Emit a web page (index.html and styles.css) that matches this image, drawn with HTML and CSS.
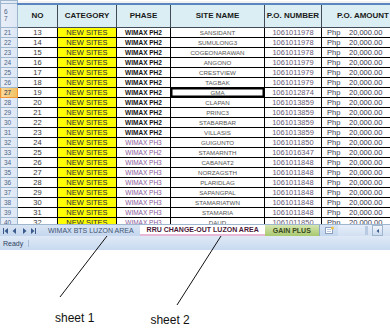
FILE: index.html
```html
<!DOCTYPE html>
<html lang="en">
<head>
    <meta charset="UTF-8">
    <meta name="viewport" content="width=device-width, initial-scale=1.0">
    <title>Sheets</title>
    <link rel="stylesheet" href="styles.css">
</head>
<body>
    <div class="excel">
        <div class="grid-wrap">
            <table class="grid">
                <colgroup>
                    <col class="c-rh"><col class="c-no"><col class="c-cat"><col class="c-phase"><col class="c-site"><col class="c-po"><col class="c-amt">
                </colgroup>
                <thead>
                    <tr class="strip"><th class="rh"></th><td colspan="6"></td></tr>
                    <tr class="head">
                        <th class="rh stack"><span>6</span><span>7</span></th>
                        <th>NO</th><th>CATEGORY</th><th>PHASE</th><th>SITE NAME</th><th>P.O. NUMBER</th><th>P.O. AMOUNT</th>
                    </tr>
                </thead>
                <tbody>
                    <tr><th class="rh">21</th><td class="no">13</td><td class="cat">NEW SITES</td><td class="ph">WIMAX PH2</td><td class="site">SANSIDANT</td><td class="po">1061011978</td><td class="amt"><span>Php</span><span>20,000.00</span></td></tr>
                    <tr><th class="rh">22</th><td class="no">14</td><td class="cat">NEW SITES</td><td class="ph">WIMAX PH2</td><td class="site">SUMULONG3</td><td class="po">1061011978</td><td class="amt"><span>Php</span><span>20,000.00</span></td></tr>
                    <tr><th class="rh">23</th><td class="no">15</td><td class="cat">NEW SITES</td><td class="ph">WIMAX PH2</td><td class="site">COGEONARAWAN</td><td class="po">1061011978</td><td class="amt"><span>Php</span><span>20,000.00</span></td></tr>
                    <tr><th class="rh">24</th><td class="no">16</td><td class="cat">NEW SITES</td><td class="ph">WIMAX PH2</td><td class="site">ANGONO</td><td class="po">1061011979</td><td class="amt"><span>Php</span><span>20,000.00</span></td></tr>
                    <tr><th class="rh">25</th><td class="no">17</td><td class="cat">NEW SITES</td><td class="ph">WIMAX PH2</td><td class="site">CRESTVIEW</td><td class="po">1061011979</td><td class="amt"><span>Php</span><span>20,000.00</span></td></tr>
                    <tr><th class="rh">26</th><td class="no">18</td><td class="cat">NEW SITES</td><td class="ph">WIMAX PH2</td><td class="site">TAGBAK</td><td class="po">1061011979</td><td class="amt"><span>Php</span><span>20,000.00</span></td></tr>
                    <tr><th class="rh active">27</th><td class="no">19</td><td class="cat">NEW SITES</td><td class="ph">WIMAX PH2</td><td class="site selected">GMA</td><td class="po">1061012874</td><td class="amt"><span>Php</span><span>20,000.00</span></td></tr>
                    <tr><th class="rh">28</th><td class="no">20</td><td class="cat">NEW SITES</td><td class="ph">WIMAX PH2</td><td class="site">CLAPAN</td><td class="po">1061013859</td><td class="amt"><span>Php</span><span>20,000.00</span></td></tr>
                    <tr><th class="rh">29</th><td class="no">21</td><td class="cat">NEW SITES</td><td class="ph">WIMAX PH2</td><td class="site">PRINC3</td><td class="po">1061013859</td><td class="amt"><span>Php</span><span>20,000.00</span></td></tr>
                    <tr><th class="rh">30</th><td class="no">22</td><td class="cat">NEW SITES</td><td class="ph">WIMAX PH2</td><td class="site">STABARBAR</td><td class="po">1061013859</td><td class="amt"><span>Php</span><span>20,000.00</span></td></tr>
                    <tr><th class="rh">31</th><td class="no">23</td><td class="cat">NEW SITES</td><td class="ph">WIMAX PH2</td><td class="site">VILLASIS</td><td class="po">1061013859</td><td class="amt"><span>Php</span><span>20,000.00</span></td></tr>
                    <tr><th class="rh">32</th><td class="no">24</td><td class="cat">NEW SITES</td><td class="ph ph3">WIMAX PH3</td><td class="site">GUIGUNTO</td><td class="po">1061011850</td><td class="amt"><span>Php</span><span>20,000.00</span></td></tr>
                    <tr><th class="rh">33</th><td class="no">25</td><td class="cat">NEW SITES</td><td class="ph ph3">WIMAX PH2</td><td class="site">STAMARNTH</td><td class="po">1061016347</td><td class="amt"><span>Php</span><span>20,000.00</span></td></tr>
                    <tr><th class="rh">34</th><td class="no">26</td><td class="cat">NEW SITES</td><td class="ph ph3">WIMAX PH3</td><td class="site">CABANAT2</td><td class="po">1061011848</td><td class="amt"><span>Php</span><span>20,000.00</span></td></tr>
                    <tr><th class="rh">35</th><td class="no">27</td><td class="cat">NEW SITES</td><td class="ph ph3">WIMAX PH3</td><td class="site">NORZAGSTH</td><td class="po">1061011848</td><td class="amt"><span>Php</span><span>20,000.00</span></td></tr>
                    <tr><th class="rh">36</th><td class="no">28</td><td class="cat">NEW SITES</td><td class="ph ph3">WIMAX PH3</td><td class="site">PLARIDLAG</td><td class="po">1061011848</td><td class="amt"><span>Php</span><span>20,000.00</span></td></tr>
                    <tr><th class="rh">37</th><td class="no">29</td><td class="cat">NEW SITES</td><td class="ph ph3">WIMAX PH3</td><td class="site">SAPANGPAL</td><td class="po">1061011848</td><td class="amt"><span>Php</span><span>20,000.00</span></td></tr>
                    <tr><th class="rh">38</th><td class="no">30</td><td class="cat">NEW SITES</td><td class="ph ph3">WIMAX PH3</td><td class="site">STAMARIATWN</td><td class="po">1061011848</td><td class="amt"><span>Php</span><span>20,000.00</span></td></tr>
                    <tr><th class="rh">39</th><td class="no">31</td><td class="cat">NEW SITES</td><td class="ph ph3">WIMAX PH3</td><td class="site">STAMARIA</td><td class="po">1061011848</td><td class="amt"><span>Php</span><span>20,000.00</span></td></tr>
                    <tr><th class="rh">40</th><td class="no">32</td><td class="cat">NEW SITES</td><td class="ph ph3">WIMAX PH3</td><td class="site">DAUD</td><td class="po">1061011850</td><td class="amt"><span>Php</span><span>20,000.00</span></td></tr>
                </tbody>
            </table>
        </div>

        <div class="tabs">
            <div class="nav">
                <svg width="38" height="8" viewBox="0 0 38 8">
                    <rect x="2" y="1" width="1" height="6" fill="#3a5a8c"/>
                    <path d="M7 1 L3.5 4 L7 7 Z" fill="#3a5a8c"/>
                    <path d="M15 1 L11.5 4 L15 7 Z" fill="#3a5a8c"/>
                    <path d="M22 1 L25.5 4 L22 7 Z" fill="#3a5a8c"/>
                    <path d="M30 1 L33.5 4 L30 7 Z" fill="#3a5a8c"/>
                    <rect x="34" y="1" width="1" height="6" fill="#3a5a8c"/>
                </svg>
            </div>
            <div class="tab">WIMAX BTS LUZON AREA</div>
            <div class="tab current">RRU CHANGE-OUT LUZON AREA</div>
            <div class="tab green">GAIN PLUS</div>
            <div class="new-sheet">
                <svg width="12" height="9" viewBox="0 0 12 9">
                    <rect x="2.5" y="1.5" width="7" height="6" fill="#fff" stroke="#8aa0c0"/>
                    <path d="M4 3.5 H8 M4 5.5 H8" stroke="#b8c8de"/>
                    <circle cx="9.5" cy="2" r="1.5" fill="#f0c040"/>
                </svg>
            </div>
            <div class="scroll">
                <div class="split"></div>
                <div class="arrow">
                    <svg width="6" height="6" viewBox="0 0 6 6"><path d="M4 1 L1.5 3 L4 5 Z" fill="#3a5a8c"/></svg>
                </div>
            </div>
        </div>

        <div class="status">
            <span class="ready">Ready</span>
        </div>
    </div>

    <div class="notes">
        <span class="note note-1">sheet 1</span>
        <span class="note note-2">sheet 2</span>
    </div>

    <!-- arrows from the labels up to the tabs -->
    <svg class="pointers" width="390" height="328" viewBox="0 0 390 328">
        <line x1="107" y1="236" x2="60" y2="297" stroke="#111" stroke-width="1"/>
        <line x1="221" y1="236" x2="177" y2="305" stroke="#111" stroke-width="1"/>
    </svg>
</body>
</html>
```

FILE: styles.css
```css
body {
    margin: 0;
    background-color: #fff;
    font-family: "Liberation Sans", Arial, sans-serif;
    width: 390px;
    height: 328px;
    overflow: hidden;
    position: relative;
}

.excel {
    width: 390px;
    overflow: hidden;
}

.grid-wrap {
    height: 224px;
    overflow: hidden;
}

.grid {
    border-collapse: collapse;
    table-layout: fixed;
    width: 404px;
}

.c-rh { width: 17px; }
.c-no { width: 40px; }
.c-cat { width: 59px; }
.c-phase { width: 54px; }
.c-site { width: 94px; }
.c-po { width: 57px; }
.c-amt { width: 83px; }

.grid th,
.grid td {
    padding: 0;
    height: 9px;
    line-height: 9px;
    border: 1px solid #000;
    white-space: nowrap;
    overflow: hidden;
    text-align: center;
}

/* row headers */
.grid .rh {
    background: linear-gradient(to right, #e9eff8, #dde7f4);
    border: 1px solid #9eb6ce;
    color: #4f6486;
    font-size: 6.5px;
    font-weight: normal;
    text-align: left;
    padding-left: 3px;
}

.grid .rh.active {
    background: linear-gradient(to right, #f9d99f, #f1c15f);
    border-color: #f29536;
    color: #1f2f4f;
}

.strip th,
.strip td {
    height: 2px;
    line-height: 0;
    font-size: 0;
}

.strip td {
    background-color: #f3f3f3;
    border: none;
    border-bottom: 2px solid #5a86c0;
}

.head th {
    height: 22px;
    background-color: #dbeef3;
    color: #1a1a1a;
    font-size: 8px;
    font-weight: bold;
    border-color: #404a58;
}

.head .rh.stack {
    line-height: 7px;
    vertical-align: middle;
}

.head .rh.stack span {
    display: block;
}

.grid td {
    font-size: 7.5px;
    color: #333;
}

.grid td.no {
    color: #3a3a3a;
}

.grid td.cat {
    background-color: #ffff00;
    color: #2a2a40;
}

.grid td.ph {
    font-size: 6.5px;
    font-weight: bold;
    color: #111;
}

.grid td.ph3 {
    font-weight: normal;
    color: #8a5a9a;
}

.grid td.site {
    font-size: 6.2px;
    color: #555;
}

.grid td.selected {
    box-shadow: inset 0 0 0 1.5px #000;
}

.grid td.po {
    font-size: 7.5px;
    color: #6a5a78;
}

.grid td.amt {
    font-size: 7.5px;
    color: #3a3a50;
    text-align: left;
}

.amt span:first-child {
    display: inline-block;
    width: 27px;
    padding-left: 5px;
    box-sizing: border-box;
}

/* sheet tabs */
.tabs {
    display: flex;
    align-items: stretch;
    height: 11px;
    background: linear-gradient(to bottom, #d8e4f3, #c4d6ee);
    border-top: 1px solid #9eb6ce;
    font-size: 7px;
}

.nav {
    display: flex;
    align-items: center;
    width: 42px;
    padding-left: 1px;
}

.tab {
    display: flex;
    align-items: center;
    padding: 0 7px;
    color: #3f5575;
    border-right: 1px solid #8fa8c8;
    margin-left: -2px;
}

.tab.current {
    background-color: #fff;
    color: #4a1838;
    font-weight: bold;
    border-bottom: 2px solid #e8b8d8;
}

.tab.green {
    background: linear-gradient(to bottom, #d6e6b0, #a8c870);
    color: #3a4a20;
    font-weight: bold;
    padding: 0 8px;
}

.new-sheet {
    display: flex;
    align-items: center;
    padding: 0 3px;
}

.scroll {
    flex: 1;
    display: flex;
    justify-content: flex-end;
    align-items: center;
    gap: 4px;
    background: linear-gradient(to bottom, #e6eef9, #d2e0f2);
}

.split {
    width: 3px;
    height: 9px;
    background-color: #b9cbe3;
}

.arrow {
    display: flex;
    align-items: center;
    justify-content: center;
    width: 9px;
    height: 9px;
    margin-right: 7px;
    background: linear-gradient(to bottom, #f4f7fc, #c9d9ef);
    border: 1px solid #9eb6ce;
}

/* status bar */
.status {
    display: flex;
    align-items: center;
    height: 14px;
    background: linear-gradient(to bottom, #dfe9f6, #c8daf0);
    font-size: 7px;
    color: #2c3e5c;
}

.ready {
    padding: 0 5px 0 3px;
    border-right: 1px solid #a8bcd8;
}

/* annotations */
.notes {
    display: flex;
    align-items: flex-start;
    padding-top: 61px;
    padding-left: 55px;
    font-size: 12px;
    color: #111;
}

.note-2 {
    margin-left: 56px;
    margin-top: 2px;
}

.pointers {
    position: absolute;
    left: 0;
    top: 0;
}
```
